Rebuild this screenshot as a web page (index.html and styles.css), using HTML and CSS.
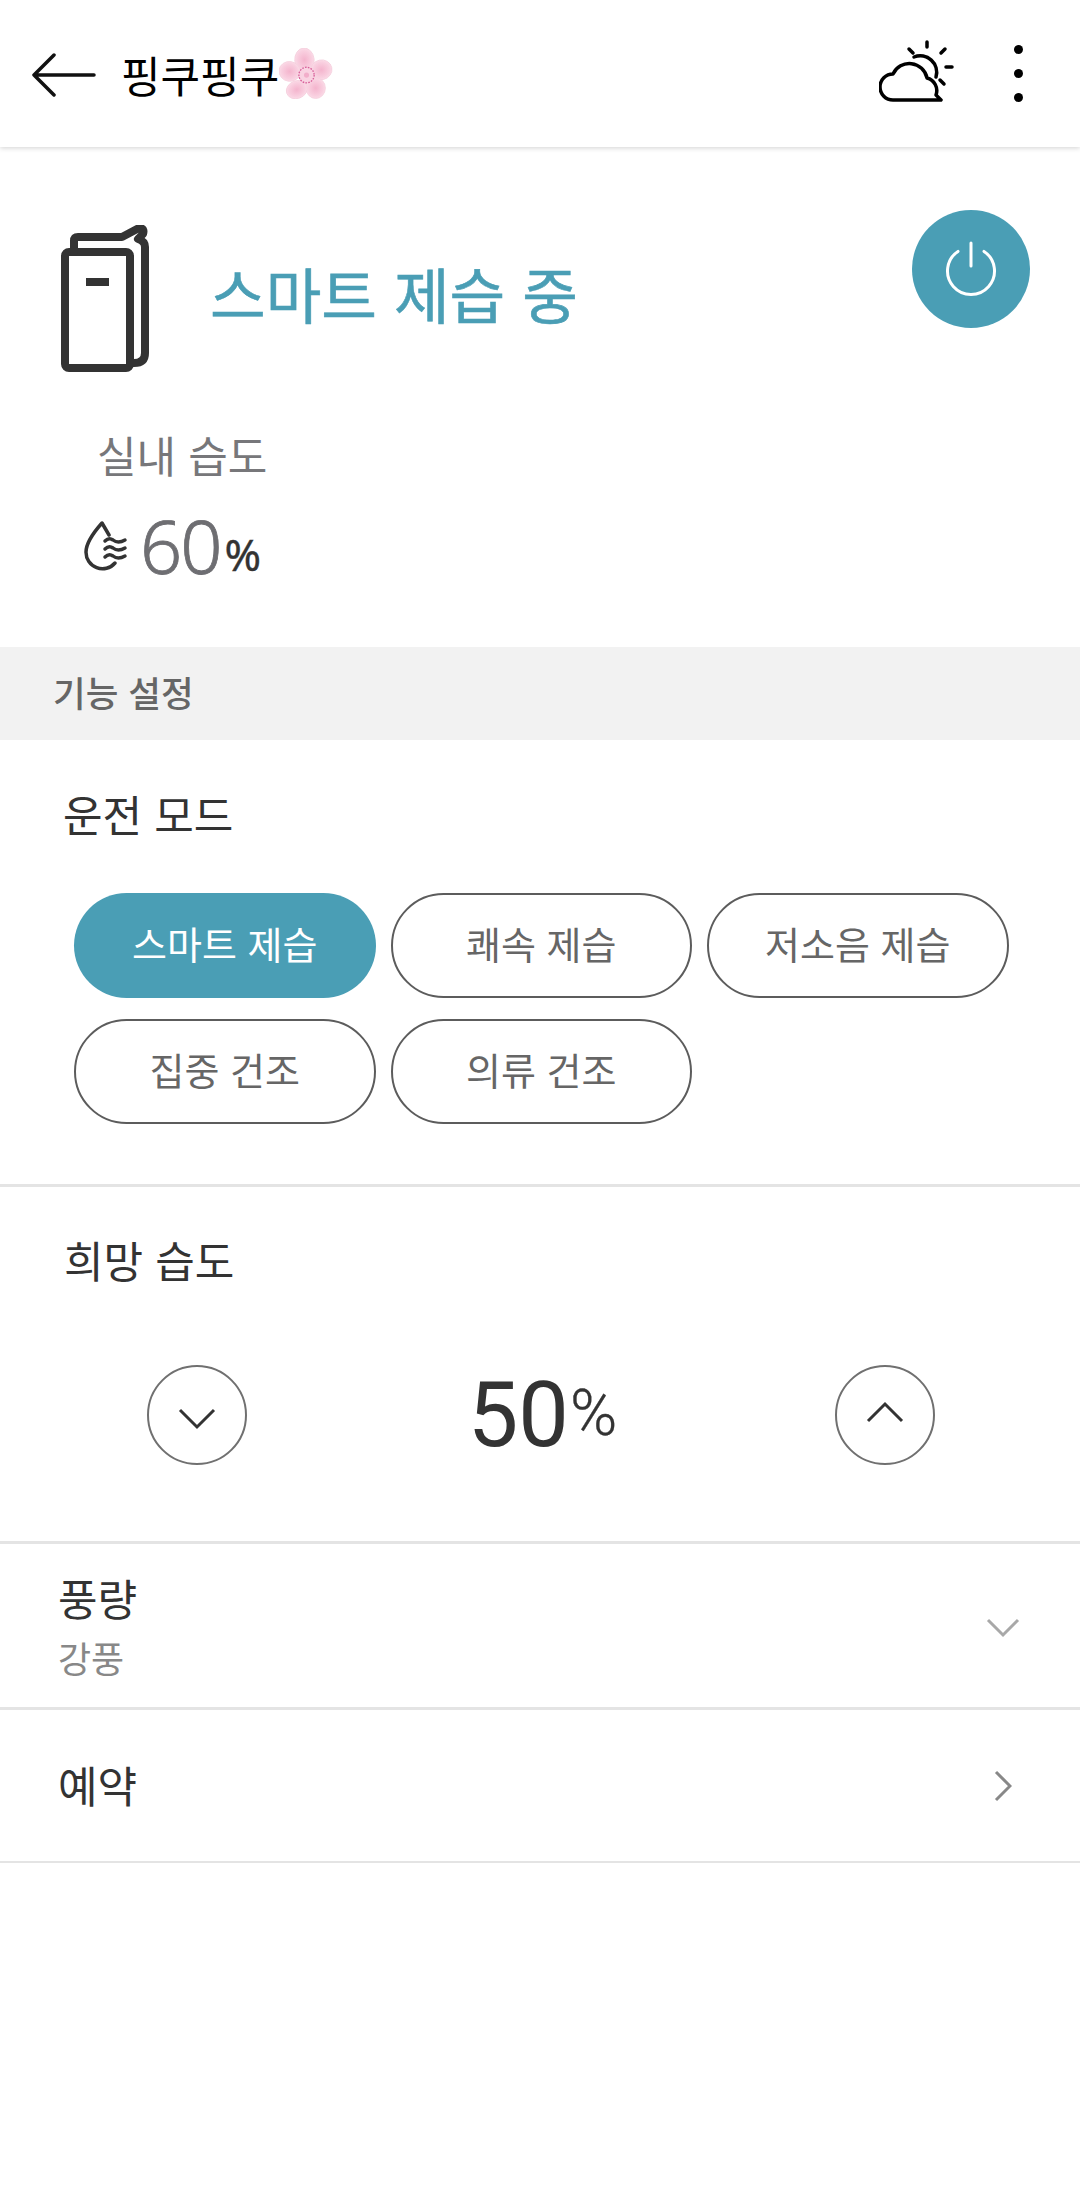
FILE: index.html
```html
<!DOCTYPE html>
<html lang="ko">

<head>
    <meta charset="UTF-8">
    <meta name="viewport" content="width=device-width, initial-scale=1.0">
    <title>핑쿠핑쿠</title>
    <link rel="stylesheet" href="styles.css">
</head>

<body>
    <header class="app-bar">
        <svg class="back-icon" width="64" height="44" viewBox="0 0 64 44">
            <path d="M22 2 L2 22 L22 42 M2 22 H62" />
        </svg>
        <h1 class="device-name">핑쿠핑쿠</h1>
        <svg class="flower" width="54" height="51" viewBox="0 0 53 49" preserveAspectRatio="none">
            <defs>
                <radialGradient id="petal" cx="50%" cy="50%" r="60%">
                    <stop offset="0" stop-color="#f4b4cd" />
                    <stop offset="0.65" stop-color="#f9d0e0" />
                    <stop offset="1" stop-color="#fde6ee" />
                </radialGradient>
            </defs>
            <g fill="url(#petal)" stroke="#f5cfdd" stroke-width="0.8">
                <ellipse cx="25" cy="11.500" rx="9.500" ry="11.500" transform="rotate(-6 25 11.500)" />
                <ellipse cx="41.500" cy="21" rx="10.500" ry="9.500" transform="rotate(-12 41.500 21)" />
                <ellipse cx="36" cy="38.500" rx="9.500" ry="10" />
                <ellipse cx="17.500" cy="40" rx="10.500" ry="8.500" transform="rotate(-20 17.500 40)" />
                <ellipse cx="10.500" cy="22.500" rx="10.500" ry="9.500" transform="rotate(8 10.500 22.500)" />
            </g>
            <circle cx="27" cy="26" r="8" fill="#f9d3e2" />
            <circle cx="27" cy="26" r="7.500" fill="none" stroke="#d8609a" stroke-width="1.300" stroke-dasharray="1.600 1.200" />
            <circle cx="27" cy="26" r="2.500" fill="#f2aeca" />
        </svg>
        <div class="app-bar-right">
            <svg class="weather" width="76" height="62" viewBox="0 0 76 62">
                <g class="weather-line">
                    <path d="M35 17 A16.500 16.500 0 0 1 57 37" />
                    <path d="M48 2 V7 M30 9 L34 13 M66 9 L62 13 M67 27 H73 M61 40 L65 44" />
                    <path d="M14 60 A13 13 0 0 1 14 34 A18 18 0 0 1 48 38 A13 13 0 0 1 57 55 L62 60 Z" />
                </g>
            </svg>
            <div class="kebab">
                <span></span>
                <span></span>
                <span></span>
            </div>
        </div>
    </header>

    <section class="status">
        <div class="status-top">
            <svg class="device-icon" width="90" height="148" viewBox="0 0 90 148">
                <g class="device-line">
                    <rect x="5" y="27" width="65" height="116" rx="4" />
                    <path d="M14 27 V16 Q14 12 18 12 H62 L79 3 Q85 3 83 9 L78 14 Q85 16 85 22 V128 Q85 138 74 138 H70" />
                    <path d="M26 57 H49" class="device-slot" />
                </g>
            </svg>
            <div class="status-text">스마트 제습 중</div>
            <button class="power-btn">
                <svg width="54" height="58" viewBox="0 0 54 58">
                    <path d="M14 11.400 A23.500 23.500 0 1 0 40 11.400 M27 3 V26" />
                </svg>
            </button>
        </div>
        <div class="humidity-label">실내 습도</div>
        <div class="humidity-row">
            <svg class="drop-icon" width="44" height="50" viewBox="0 0 44 50">
                <g class="drop-line">
                    <path d="M25 14 L18 2 Q2 20 2 31 A16.500 16.500 0 0 0 31 42" />
                    <path d="M21 20 Q25 16 29 19 Q34 23 41 19 M21 28 Q25 24 29 27 Q34 31 41 27 M21 36 Q25 32 29 35 Q34 39 41 35" />
                </g>
            </svg>
            <span class="humidity-value">60</span>
            <span class="humidity-unit">%</span>
        </div>
    </section>

    <div class="section-bar">기능 설정</div>

    <section class="mode">
        <h2 class="section-title">운전 모드</h2>
        <div class="pills">
            <button class="pill pill-on">스마트 제습</button>
            <button class="pill">쾌속 제습</button>
            <button class="pill">저소음 제습</button>
            <button class="pill">집중 건조</button>
            <button class="pill">의류 건조</button>
        </div>
    </section>

    <section class="target">
        <h2 class="section-title target-title">희망 습도</h2>
        <div class="stepper">
            <button class="step-btn">
                <svg class="step-down" width="38" height="22" viewBox="0 0 38 22"><path d="M2 2 L19 19 L36 2" /></svg>
            </button>
            <div class="target-value">50<span class="target-unit">%</span></div>
            <button class="step-btn">
                <svg class="step-up" width="38" height="22" viewBox="0 0 38 22"><path d="M2 20 L19 3 L36 20" /></svg>
            </button>
        </div>
    </section>

    <div class="row row-wind">
        <div>
            <div class="row-title">풍량</div>
            <div class="row-sub">강풍</div>
        </div>
        <svg class="chev" width="34" height="20" viewBox="0 0 34 20"><path d="M2 2 L17 17 L32 2" /></svg>
    </div>
    <div class="row row-timer">
        <div class="row-title">예약</div>
        <svg class="chev chev-right" width="18" height="32" viewBox="0 0 18 32"><path d="M2 2 L16 16 L2 30" /></svg>
    </div>
</body>

</html>
```

FILE: styles.css
```css
* {
    box-sizing: border-box;
}

body {
    margin: 0;
    background-color: #fff;
    font-family: "Noto Sans CJK KR", "Noto Sans", sans-serif;
    color: #333;
}

button {
    font-family: inherit;
    padding: 0;
    background: none;
}

svg {
    display: block;
    fill: none;
}

.app-bar {
    height: 147px;
    display: flex;
    align-items: center;
    padding: 0 0 0 32px;
    box-shadow: 0 1px 5px rgba(0, 0, 0, 0.18);
}

.back-icon path {
    stroke: #111;
    stroke-width: 3.5;
    stroke-linecap: round;
    stroke-linejoin: round;
}

.back-icon {
    margin-top: 3px;
}

.device-name {
    margin: 0 0 0 25px;
    font-size: 43px;
    font-weight: 400;
    color: #000;
}

.flower {
    margin: 0;
}

.app-bar-right {
    margin-left: auto;
    display: flex;
    align-items: center;
}

.weather {
    margin-top: -5px;
}

.weather-line path {
    stroke: #000;
    stroke-width: 3.5;
    stroke-linecap: round;
    stroke-linejoin: round;
}

.kebab {
    margin: 0 57px 0 59px;
    display: flex;
    flex-direction: column;
    gap: 15px;
}

.kebab span {
    width: 9px;
    height: 9px;
    border-radius: 50%;
    background: #000;
}

.status {
    height: 500px;
    padding: 63px 50px 0 60px;
}

.status-top {
    display: flex;
    align-items: flex-start;
}

.device-icon {
    margin-top: 15px;
}

.device-line rect,
.device-line path {
    stroke: #333;
    stroke-width: 8;
    stroke-linejoin: round;
    stroke-linecap: round;
}

.device-line .device-slot {
    stroke-linecap: butt;
}

.status-text {
    margin: 41px 0 0 60px;
    font-size: 60.5px;
    font-weight: 400;
    line-height: 84px;
    color: #4a9eb5;
    -webkit-text-stroke: 0.6px #4a9eb5;
}

.power-btn {
    margin-left: auto;
    width: 118px;
    height: 118px;
    border: none;
    border-radius: 50%;
    background: #4a9eb5;
    display: flex;
    align-items: center;
    justify-content: center;
}

.power-btn path {
    stroke: #fff;
    stroke-width: 3;
    stroke-linecap: round;
}

.humidity-label {
    margin: 53px 0 0 37px;
    font-size: 43px;
    line-height: 56px;
    color: #77777a;
}

.humidity-row {
    margin: 19px 0 0 24px;
    display: flex;
    align-items: baseline;
}

.drop-icon {
    align-self: center;
}

.drop-line path {
    stroke: #333;
    stroke-width: 3.5;
    stroke-linecap: round;
    stroke-linejoin: round;
}

.humidity-value {
    margin-left: 12px;
    font-family: "Noto Sans", sans-serif;
    font-size: 74px;
    font-weight: 300;
    letter-spacing: -2px;
    line-height: 90px;
    color: #6e6e72;
    -webkit-text-stroke: 0.8px #6e6e72;
}

.humidity-unit {
    margin-left: 4px;
    font-family: "Noto Sans", sans-serif;
    font-size: 44px;
    font-weight: 400;
    color: #333;
    -webkit-text-stroke: 0.4px #333;
    position: relative;
    top: -3px;
}

.section-bar {
    height: 93px;
    padding: 0 0 4px 53px;
    display: flex;
    align-items: center;
    background: #f2f2f2;
    font-size: 35.5px;
    font-weight: 500;
    color: #666;
}

.section-title {
    margin: 0;
    font-size: 43px;
    line-height: 60px;
    font-weight: 400;
    color: #333;
}

.mode {
    height: 447px;
    padding: 43px 0 0 63px;
    border-bottom: 3px solid #e4e4e4;
}

.pills {
    margin: 50px 0 0 11px;
    display: grid;
    grid-template-columns: repeat(3, 301.5px);
    gap: 21px 15px;
}

.pill {
    height: 105px;
    padding-bottom: 7px;
    border: 2px solid #5c5c5c;
    border-radius: 53px;
    background: #fff;
    font-size: 38px;
    color: #666;
}

.pill-on {
    border: none;
    background: #4a9eb5;
    color: #fff;
}

.target {
    height: 357px;
    padding-top: 42px;
    border-bottom: 3px solid #e4e4e4;
}

.target-title {
    margin-left: 64px;
}

.stepper {
    margin-top: 72px;
    padding: 0 145px 0 147px;
    display: flex;
    align-items: center;
    justify-content: space-between;
}

.step-btn {
    width: 100px;
    height: 100px;
    border: 2.5px solid #707070;
    border-radius: 50%;
    background: #fff;
    display: flex;
    align-items: center;
    justify-content: center;
}

.step-btn path {
    stroke: #333;
    stroke-width: 3;
}

.step-down {
    margin-top: 8px;
}

.step-up {
    margin-bottom: 6px;
}

.target-value {
    margin: 12px 0 0 3px;
    font-family: Roboto, sans-serif;
    font-size: 90px;
    line-height: 86px;
    color: #333;
}

.target-unit {
    margin-left: 1px;
    font-size: 64px;
    font-weight: 300;
    -webkit-text-stroke: 0.3px #333;
    position: relative;
    top: -11px;
}

.row {
    padding: 0 60px 0 58px;
    display: flex;
    align-items: center;
    justify-content: space-between;
    border-bottom: 3px solid #e4e4e4;
}

.row-wind {
    height: 166px;
}

.row-timer {
    height: 153px;
    border-bottom-width: 2px;
    padding-bottom: 3px;
}

.row-title {
    font-size: 43px;
    line-height: 56px;
    color: #333;
}

.row-sub {
    margin-top: 7px;
    font-size: 36px;
    line-height: 50px;
    color: #888;
}

.chev {
    margin-top: 4px;
}

.chev path {
    stroke: #a8a8a8;
    stroke-width: 3;
}

.chev-right {
    margin-right: 8px;
}

.chev-right path {
    stroke: #888;
}
```
